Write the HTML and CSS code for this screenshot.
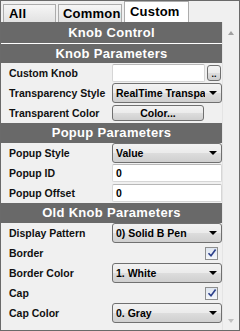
FILE: index.html
```html
<!DOCTYPE html>
<html>
<head>
<meta charset="utf-8">
<link rel="stylesheet" href="styles.css">
</head>
<body>
<div class="window">
  <div class="tabs">
    <div class="tab tab-all">All</div>
    <div class="tab tab-common">Common</div>
    <div class="tab tab-custom active">Custom</div>
  </div>
  <div class="body">
    <div class="content">
      <div class="header first">Knob Control</div>
      <div class="sep"></div>
      <div class="header second">Knob Parameters</div>
      <div class="row">
        <div class="label">Custom Knob</div>
        <div class="value">
          <div class="input input-short"></div>
          <div class="btn btn-dots">..</div>
        </div>
      </div>
      <div class="row">
        <div class="label">Transparency Style</div>
        <div class="value"><div class="select light"><span class="sel-text">RealTime Transpa</span><span class="arrow"></span></div></div>
      </div>
      <div class="row">
        <div class="label">Transparent Color</div>
        <div class="value"><div class="btn btn-color">Color...</div></div>
      </div>
      <div class="header">Popup Parameters</div>
      <div class="row">
        <div class="label">Popup Style</div>
        <div class="value"><div class="select"><span class="sel-text">Value</span><span class="arrow"></span></div></div>
      </div>
      <div class="row">
        <div class="label">Popup ID</div>
        <div class="value"><div class="input">0</div></div>
      </div>
      <div class="row">
        <div class="label">Popup Offset</div>
        <div class="value"><div class="input">0</div></div>
      </div>
      <div class="header">Old Knob Parameters</div>
      <div class="row">
        <div class="label">Display Pattern</div>
        <div class="value"><div class="select"><span class="sel-text">0) Solid B Pen</span><span class="arrow"></span></div></div>
      </div>
      <div class="row">
        <div class="label">Border</div>
        <div class="value end"><span class="check"><svg width="10" height="10" viewBox="0 0 10 10"><path d="M1.5 5.2 L4 7.8 L8.6 1.6" fill="none" stroke="#2b3f8a" stroke-width="1.6"/></svg></span></div>
      </div>
      <div class="row">
        <div class="label">Border Color</div>
        <div class="value"><div class="select"><span class="sel-text">1. White</span><span class="arrow"></span></div></div>
      </div>
      <div class="row">
        <div class="label">Cap</div>
        <div class="value end"><span class="check"><svg width="10" height="10" viewBox="0 0 10 10"><path d="M1.5 5.2 L4 7.8 L8.6 1.6" fill="none" stroke="#2b3f8a" stroke-width="1.6"/></svg></span></div>
      </div>
      <div class="row">
        <div class="label">Cap Color</div>
        <div class="value"><div class="select"><span class="sel-text">0. Gray</span><span class="arrow"></span></div></div>
      </div>
    </div>
    <div class="scrollbar">
      <span class="sb-up"></span>
      <span class="sb-down"></span>
    </div>
  </div>
</div>
</body>
</html>
```

FILE: styles.css
```css
html, body {
  margin: 0;
  padding: 0;
  background: #f0f0f0;
}
body {
  font-family: "Liberation Sans", Arial, sans-serif;
  font-size: 11px;
  color: #000;
}
.window {
  width: 240px;
  height: 331px;
  box-sizing: border-box;
  border: 1px solid #6a6a6a;
  background: #f0f0f0;
  display: flex;
  flex-direction: column;
  overflow: hidden;
}
.tabs {
  height: 21px;
  display: flex;
  align-items: flex-end;
  padding-left: 2px;
  gap: 2px;
  flex: none;
}
.tab {
  box-sizing: border-box;
  height: 18px;
  border: 1px solid #acacac;
  border-bottom: none;
  background: linear-gradient(#f6f6f6, #e2e2e2);
  font-weight: bold;
  font-size: 13px;
  line-height: 18px;
  padding-left: 5px;
  letter-spacing: 0.2px;
}
.tab-all { width: 53px; }
.tab-common { width: 64px; padding-left: 4px; }
.tab-custom {
  width: 65px;
  height: 21px;
  line-height: 20px;
  background: #fff;
  padding-left: 5px;
}
.body {
  flex: 1;
  display: flex;
  min-height: 0;
}
.content {
  width: 221px;
  flex: none;
  display: flex;
  flex-direction: column;
}
.header {
  height: 20px;
  background: #696969;
  color: #fff;
  font-weight: bold;
  font-size: 13px;
  line-height: 20px;
  text-align: center;
  letter-spacing: 0.3px;
  flex: none;
}
.header.first { height: 21px; line-height: 21px; }
.header.second { height: 19px; line-height: 19px; }
.sep {
  height: 1px;
  background: #fff;
  flex: none;
}
.row {
  height: 20px;
  display: flex;
  align-items: center;
  flex: none;
}
.label {
  width: 103px;
  padding-left: 8px;
  flex: none;
  font-weight: bold;
  font-size: 10.5px;
  color: #111;
  white-space: nowrap;
}
.value {
  flex: 1;
  display: flex;
  align-items: center;
  gap: 2px;
  padding-right: 0;
  min-width: 0;
}
.value.end { justify-content: flex-end; padding-right: 4px; }
.input {
  box-sizing: border-box;
  flex: 1;
  height: 18px;
  background: #fff;
  border: 1px solid #d6d6d6;
  border-top-color: #b8b8b8;
  border-radius: 2px;
  font-weight: bold;
  font-size: 10.5px;
  line-height: 16px;
  padding-left: 3px;
}
.input-short { flex: none; width: 93px; }
.btn {
  box-sizing: border-box;
  border: 1px solid #707070;
  border-radius: 3px;
  background: linear-gradient(#f3f3f3 0%, #ebebeb 50%, #dddddd 51%, #cfcfcf 100%);
  text-align: center;
  font-size: 10.5px;
  font-weight: bold;
}
.btn-dots {
  width: 14px;
  height: 16px;
  line-height: 16px;
  font-size: 9px;
}
.btn-color {
  width: 92px;
  height: 16px;
  line-height: 14px;
}
.select {
  box-sizing: border-box;
  flex: 1;
  height: 20px;
  border: 1px solid #707070;
  border-radius: 3px;
  background: linear-gradient(#f2f2f2 0%, #ebebeb 50%, #dddddd 51%, #cfcfcf 100%);
  display: flex;
  align-items: center;
  padding-left: 3px;
  padding-right: 4px;
  font-weight: bold;
  font-size: 10.5px;
  overflow: hidden;
}
.select.light { font-weight: bold; }
.sel-text {
  flex: 1;
  white-space: nowrap;
  overflow: hidden;
}
.arrow {
  flex: none;
  width: 0;
  height: 0;
  border-left: 4px solid transparent;
  border-right: 4px solid transparent;
  border-top: 4px solid #000;
  margin-left: 4px;
}
.check {
  box-sizing: border-box;
  width: 13px;
  height: 13px;
  border: 1px solid #8e8f8f;
  background: linear-gradient(#dfe6f0, #f4f6fa);
  display: flex;
  align-items: center;
  justify-content: center;
}
.check svg { display: block; }
.scrollbar {
  flex: 1;
  background: #f0f0f0;
  border-left: 1px solid #e4e4e4;
  position: relative;
}
.sb-up, .sb-down {
  position: absolute;
  left: 5px;
  width: 0;
  height: 0;
  border-left: 3.5px solid transparent;
  border-right: 3.5px solid transparent;
}
.sb-up {
  top: 9px;
  border-bottom: 4px solid #a0a0a0;
}
.sb-down {
  bottom: 7px;
  border-top: 4px solid #c0c0c0;
}
```
